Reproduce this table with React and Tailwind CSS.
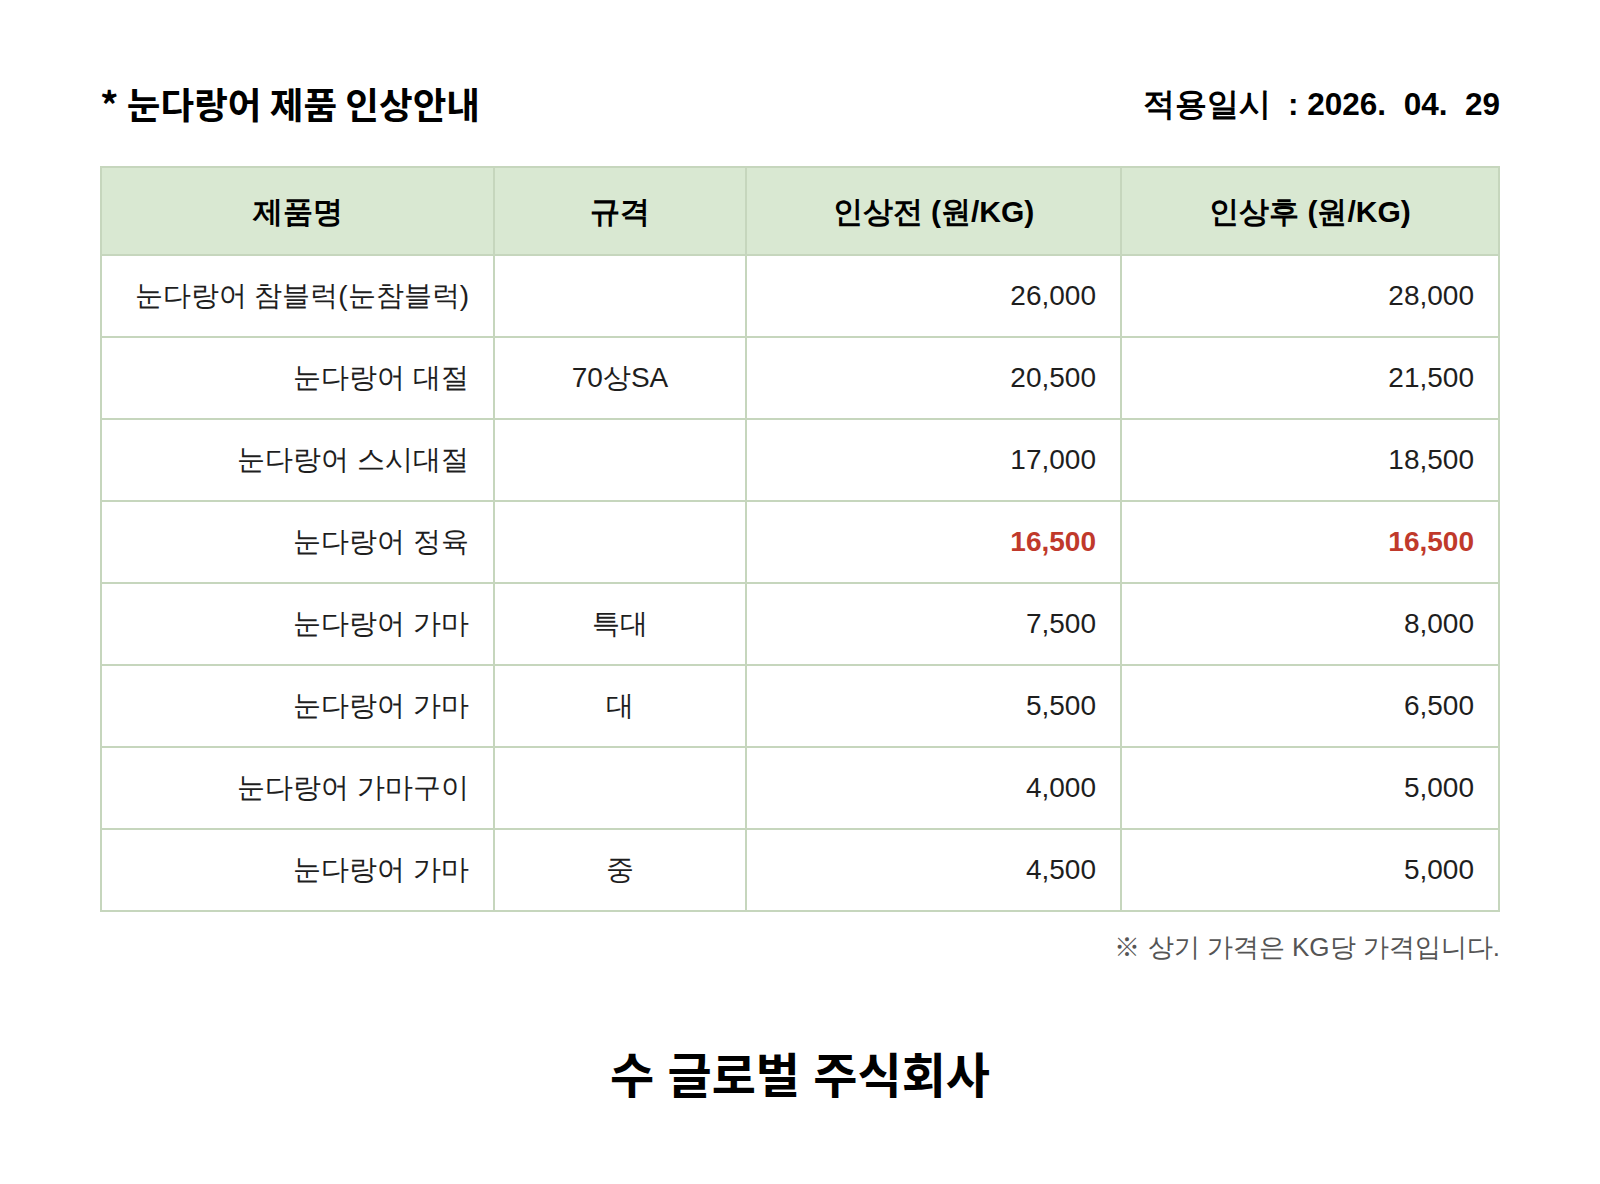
const rows = [
  { name: "눈다랑어 참블럭(눈참블럭)", spec: "", before: "26,000", after: "28,000" },
  { name: "눈다랑어 대절", spec: "70상SA", before: "20,500", after: "21,500" },
  { name: "눈다랑어 스시대절", spec: "", before: "17,000", after: "18,500" },
  { name: "눈다랑어 정육", spec: "", before: "16,500", after: "16,500", highlight: true },
  { name: "눈다랑어 가마", spec: "특대", before: "7,500", after: "8,000" },
  { name: "눈다랑어 가마", spec: "대", before: "5,500", after: "6,500" },
  { name: "눈다랑어 가마구이", spec: "", before: "4,000", after: "5,000" },
  { name: "눈다랑어 가마", spec: "중", before: "4,500", after: "5,000" },
];

function HeadCell({ children }) {
  return (
    <th className="border-2 border-[#c6d6bd] bg-[#d9e8d2] font-bold text-[30px] text-black">
      {children}
    </th>
  );
}

export default function App() {
  return (
    <div className="min-h-[1184px] bg-white font-['Liberation_Sans',sans-serif] text-[#1e1e1e]">
      <div className="mx-auto w-[1400px] pt-[82px]">
        <div className="flex items-center justify-between h-[44px] mb-[40px] font-bold text-black">
          <h1 className="font-['Noto_Sans_CJK_KR',sans-serif] text-[36.6px] leading-[44px]">* 눈다랑어 제품 인상안내</h1>
          <div className="text-[31.5px] leading-[44px]">적용일시{"\u00a0"} : 2026.{"\u00a0"} 04.{"\u00a0"} 29</div>
        </div>

        <table className="w-[1398px] mx-auto border-collapse table-fixed">
          <colgroup>
            <col className="w-[393px]" />
            <col className="w-[252px]" />
            <col className="w-[375px]" />
            <col className="w-[378px]" />
          </colgroup>
          <thead>
            <tr className="h-[88px]">
              <HeadCell>제품명</HeadCell>
              <HeadCell>규격</HeadCell>
              <HeadCell>인상전 (원/KG)</HeadCell>
              <HeadCell>인상후 (원/KG)</HeadCell>
            </tr>
          </thead>
          <tbody className="text-[28px]">
            {rows.map((r, i) => (
              <tr key={i} className="h-[82px]">
                <td className="border-2 border-[#c6d6bd] text-right pr-[24px] whitespace-nowrap">{r.name}</td>
                <td className="border-2 border-[#c6d6bd] text-center">{r.spec}</td>
                <td className={`border-2 border-[#c6d6bd] text-right pr-[24px] ${r.highlight ? "font-bold text-[#c0392b]" : ""}`}>{r.before}</td>
                <td className={`border-2 border-[#c6d6bd] text-right pr-[24px] ${r.highlight ? "font-bold text-[#c0392b]" : ""}`}>{r.after}</td>
              </tr>
            ))}
          </tbody>
        </table>

        <p className="mt-[17px] text-right text-[26px] leading-[36px] text-[#555555]">
          ※ 상기 가격은 KG당 가격입니다.
        </p>

        <h2 className="mt-[82px] text-center font-['Liberation_Sans','Noto_Sans_CJK_KR',sans-serif] text-[48px] leading-[60px] font-bold text-black">
          수 글로벌 주식회사
        </h2>
      </div>
    </div>
  );
}
